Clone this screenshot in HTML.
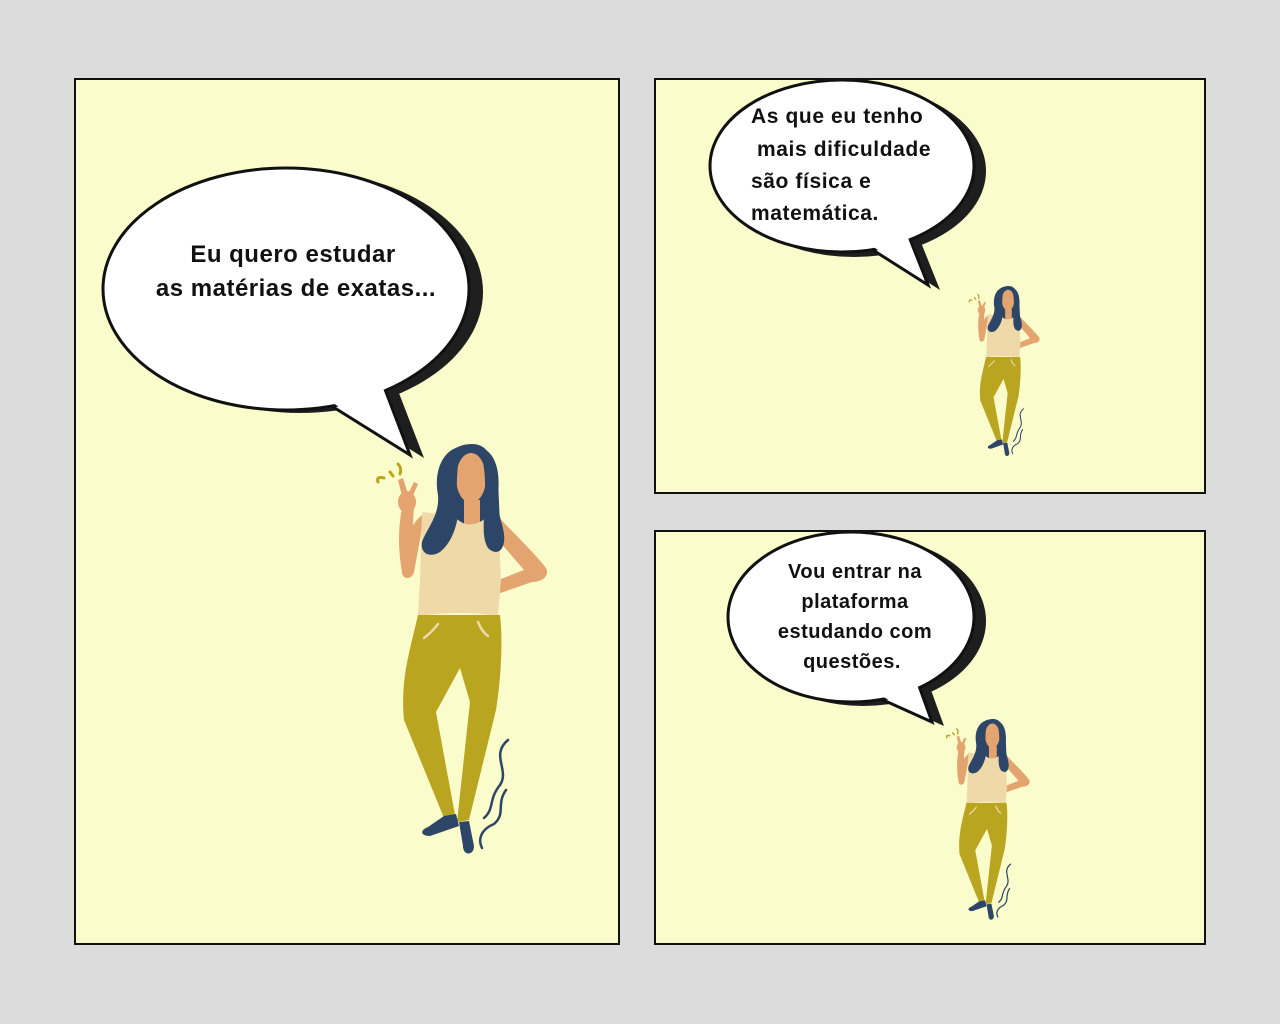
<!DOCTYPE html>
<html><head><meta charset="utf-8"><style>
html,body{margin:0;padding:0;background:#dcdcdc;}
svg{display:block}
text{font-family:"Liberation Sans",sans-serif;font-weight:bold;fill:#111}
</style></head><body>
<svg width="1280" height="1024" viewBox="0 0 1280 1024" xmlns="http://www.w3.org/2000/svg">
<defs>
<symbol id="fig" viewBox="0 0 200 440">
  <g stroke="#b9a520" stroke-width="3" fill="none" stroke-linecap="round">
    <path d="M18 52 Q16 46 24 48"/><path d="M30 42 L33 46"/><path d="M38 34 Q42 38 40 44"/>
  </g>
  <path d="M64 84 C50 92 45 112 42 142 C42 150 52 150 54 142 L60 110 Z" fill="#e3a46f"/>
  <path d="M42 142 C38 120 38 98 42 78 L54 76 C52 100 54 125 54 142 Z" fill="#e3a46f"/>
  <ellipse cx="47" cy="72" rx="9" ry="11" fill="#e3a46f"/>
  <path d="M42 66 L38 50 L43 48 L48 64 Z M48 64 L54 52 L58 54 L52 68 Z" fill="#e3a46f"/>
  <path d="M136 84 C150 100 172 120 186 138 C190 146 182 152 172 152 L132 166 L118 158 L164 140 L140 112 Z" fill="#e3a46f"/>
  <path d="M112 14 C88 14 78 35 80 60 L80 95 L140 95 L138 50 C132 24 126 14 112 14 Z" fill="#2d4566"/>
  <rect x="104" y="70" width="16" height="26" fill="#e3a46f"/>
  <path d="M62 82 L94 86 Q108 102 126 88 L138 84 L141 150 L138 186 Q100 180 58 186 L60 150 Z" fill="#efd9a8"/>
  <ellipse cx="111" cy="48" rx="15" ry="25" fill="#e3a46f"/>
  <path d="M102 16 C80 20 74 45 78 65 C80 85 66 100 62 112 C60 124 70 128 80 122 C90 114 96 100 98 85 C96 60 96 35 102 16 Z" fill="#2d4566"/>
  <path d="M118 16 C138 22 140 45 138 65 C136 85 146 98 144 112 C142 124 134 124 128 118 C122 108 124 95 124 80 C126 55 126 35 118 16 Z" fill="#2d4566"/>
  <path d="M58 185 L140 185 C143 210 141 250 136 280 L109 390 L97 392 L110 272 L100 238 L76 282 L95 385 L84 388 L44 290 C40 250 50 220 58 185 Z" fill="#b9a520"/>
  <path d="M78 194 Q72 202 64 208 M118 192 Q122 202 128 206" stroke="#efd9a8" stroke-width="2.5" fill="none" stroke-linecap="round"/>
  <path d="M84 386 L96 384 L99 396 L70 406 C60 406 60 400 68 397 Z" fill="#2d4566"/>
  <path d="M99 392 L109 391 L114 416 C114 426 103 426 103 416 Z" fill="#2d4566"/>
  <g stroke="#2d4566" stroke-width="2.5" fill="none" stroke-linecap="round">
    <path d="M148 310 C130 325 150 340 140 355 C128 370 135 378 124 388"/>
    <path d="M146 360 C136 374 146 384 134 394 C120 400 118 410 122 418"/>
  </g>
</symbol>
</defs>

<rect x="75" y="79" width="544" height="865" fill="#fafccb" stroke="#111" stroke-width="2"/>
<rect x="655" y="79" width="550" height="414" fill="#fafccb" stroke="#111" stroke-width="2"/>
<rect x="655" y="531" width="550" height="413" fill="#fafccb" stroke="#111" stroke-width="2"/>

<g transform="translate(14,3)" fill="#1e1e1e">
  <ellipse cx="286" cy="289" rx="183" ry="121"/><polygon points="322,400 410,455 383,385"/>
</g>
<polygon points="322,400 410,455 383,385" fill="#fff" stroke="#111" stroke-width="3"/>
<ellipse cx="286" cy="289" rx="183" ry="121" fill="#fff" stroke="#111" stroke-width="3"/>
<polygon points="325,398 406,449 381,383" fill="#fff"/>
<g font-size="24" text-anchor="middle" letter-spacing="0.5">
<text x="293" y="262">Eu quero estudar</text>
<text x="296" y="296">as matérias de exatas...</text>
</g>

<g transform="translate(12,5)" fill="#1e1e1e">
  <ellipse cx="842" cy="166" rx="132" ry="86"/><polygon points="865,245 928,285 908,235"/>
</g>
<polygon points="865,245 928,285 908,235" fill="#fff" stroke="#111" stroke-width="3"/>
<ellipse cx="842" cy="166" rx="132" ry="86" fill="#fff" stroke="#111" stroke-width="3"/>
<polygon points="867,243 924,279 906,233" fill="#fff"/>
<g font-size="21" letter-spacing="0.6">
<text x="751" y="123">As que eu tenho</text>
<text x="757" y="156">mais dificuldade</text>
<text x="751" y="188">são física e</text>
<text x="751" y="220">matemática.</text>
</g>

<g transform="translate(12,4)" fill="#1e1e1e">
  <ellipse cx="851" cy="617" rx="123" ry="85"/><polygon points="872,695 932,722 915,675"/>
</g>
<polygon points="872,695 932,722 915,675" fill="#fff" stroke="#111" stroke-width="3"/>
<ellipse cx="851" cy="617" rx="123" ry="85" fill="#fff" stroke="#111" stroke-width="3"/>
<polygon points="874,693 928,717 913,673" fill="#fff"/>
<g font-size="20" text-anchor="middle" letter-spacing="0.5">
<text x="855" y="578">Vou entrar na</text>
<text x="855" y="608">plataforma</text>
<text x="855" y="638">estudando com</text>
<text x="852" y="668">questões.</text>
</g>

<use href="#fig" x="360" y="430" width="200" height="440"/>
<use href="#fig" x="962" y="280" width="83" height="183"/>
<use href="#fig" x="938" y="712" width="98" height="216"/>
</svg>
</body></html>
